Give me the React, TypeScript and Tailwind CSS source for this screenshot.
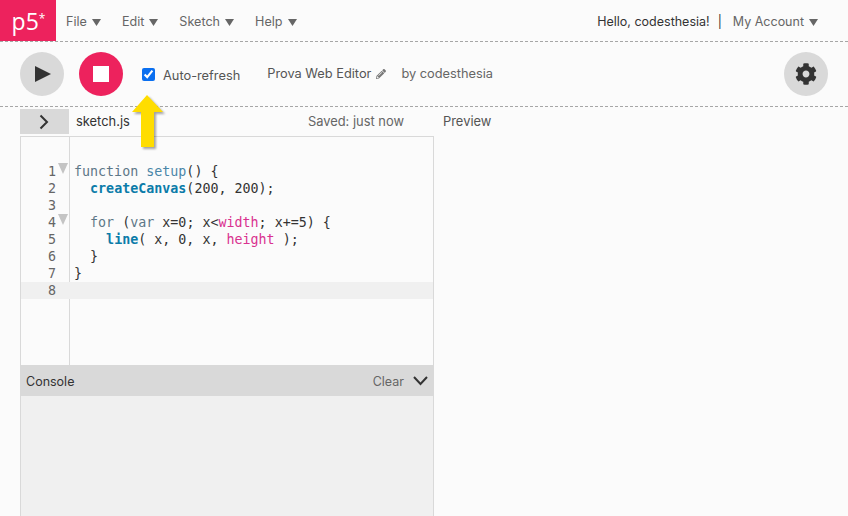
import { FaCog, FaPencilAlt } from "react-icons/fa";

const Caret = () => (
  <svg width="9" height="7" viewBox="0 0 9 7" className="ml-[5px] mt-[1px]">
    <path d="M0 0h9L4.500 7z" fill="#666" />
  </svg>
);

const Fold = () => (
  <svg width="10" height="11" viewBox="0 0 10 11" className="absolute left-[37px] top-0">
    <path d="M0 0h10L5 11z" fill="#c4c4c4" />
  </svg>
);

const Kw = ({ children }: { children: string }) => <span className="text-[#5d7787]">{children}</span>;
const Fn = ({ children }: { children: string }) => <span className="font-bold text-[#0b7ca9]">{children}</span>;
const Pk = ({ children }: { children: string }) => <span className="text-[#d9328f]">{children}</span>;

const lines = [
  <><Kw>function</Kw> <span className="text-[#4a86a8]">setup</span>() {"{"}</>,
  <>  <Fn>createCanvas</Fn>(200, 200);</>,
  <></>,
  <>  <Kw>for</Kw> (<Kw>var</Kw> x=0; x&lt;<Pk>width</Pk>; x+=5) {"{"}</>,
  <>    <Fn>line</Fn>( x, 0, x, <Pk>height</Pk> );</>,
  <>  {"}"}</>,
  <>{"}"}</>,
  <></>,
];

const menu = ["File", "Edit", "Sketch", "Help"];

export default function App() {
  return (
    <div className="relative h-[516px] w-full overflow-hidden bg-[#fbfbfb] text-[#333] font-['Inter',sans-serif]">
      <nav className="flex h-[42px] items-center border-b border-dashed border-[#a6a6a6] pr-[30px]">
        <div className="flex h-[41px] w-[56px] items-start justify-center bg-[#ed225d] pl-[1px] pt-[6px] font-['Open_Sans',sans-serif] text-[23px] font-medium leading-[30px] text-white">
          p5<span className="mt-[6px] text-[12px] leading-[14px]">*</span>
        </div>
        <ul className="ml-[10px] flex gap-[21px] pt-[3px] text-[12.6px] text-[#666]">
          {menu.map((item) => (
            <li key={item} className="flex items-center">
              {item}
              <Caret />
            </li>
          ))}
        </ul>
        <div className="ml-auto flex items-center pt-[3px] text-[12.5px]">
          <span className="text-[#333]">Hello, codesthesia!</span>
          <span className="ml-[8px] mr-[11px]">|</span>
          <span className="flex items-center text-[#666]">
            My Account
            <Caret />
          </span>
        </div>
      </nav>

      <div className="flex h-[65px] items-center border-b border-dashed border-[#a6a6a6] pl-[20px] pr-[20px]">
        <button className="flex size-[44px] items-center justify-center rounded-full bg-[#d9d9d9] pl-[2px]">
          <svg width="16" height="16" viewBox="0 0 16 16">
            <path d="M0 0l16 8-16 8z" fill="#333" />
          </svg>
        </button>
        <button className="ml-[15px] flex size-[44px] items-center justify-center rounded-full bg-[#ed225d]">
          <span className="size-[16px] bg-white" />
        </button>
        <input type="checkbox" defaultChecked className="ml-[19px] size-[13px] accent-[#0a6ff0]" />
        <span className="ml-[8px] mt-[3px] text-[12.8px] text-[#555]">Auto-refresh</span>
        <span className="ml-[27px] text-[12.8px] text-[#555]">Prova Web Editor</span>
        <FaPencilAlt className="ml-[5px] text-[#777]" size={10} />
        <span className="ml-[15px] text-[12.8px] text-[#666]">by codesthesia</span>
        <button className="ml-auto flex size-[44px] items-center justify-center rounded-full bg-[#d9d9d9]">
          <FaCog className="text-[#333]" size={22} />
        </button>
      </div>

      <div className="ml-[20px] mt-[2px] flex h-[25px] items-center text-[12.9px]">
        <div className="flex h-[25px] w-[49px] items-center justify-center bg-[#d9d9d9] pr-[2px]">
          <svg width="10" height="16" viewBox="0 0 10 16" fill="none" stroke="#333" strokeWidth="2">
            <path d="M1.500 1.500L8 8l-6.500 6.500" />
          </svg>
        </div>
        <span className="ml-[7px] mt-[1px] text-[#333]">sketch.js</span>
        <span className="ml-auto mt-[1px] text-[#666]">Saved: just now</span>
        <span className="ml-[39px] mt-[1px] w-[405px] text-[#555]">Preview</span>
      </div>

      <div className="ml-[20px] mt-[2px] flex h-[380px] w-[414px] flex-col border-x border-t border-[#d9d9d9]">
        <div className="relative flex-1 bg-[#fbfbfb] pt-[26px] font-['DejaVu_Sans_Mono',monospace] text-[13.33px] leading-[17px]">
          <div className="absolute bottom-0 left-[48px] top-0 w-px bg-[#d9d9d9]" />
          {lines.map((line, i) => (
            <div key={i} className={`relative flex h-[17px] ${i === 7 ? "bg-[#f0f0f0]" : ""}`}>
              <span className="w-[35px] text-right text-[#666]">{i + 1}</span>
              {(i === 0 || i === 3) && <Fold />}
              <pre className="ml-[18px] font-['DejaVu_Sans_Mono',monospace] text-[#333]">{line}</pre>
            </div>
          ))}
        </div>
        <div className="flex h-[31px] items-center justify-between bg-[#d9d9d9] pl-[5px] pr-[5px] pt-[3px] text-[12.5px]">
          <span className="text-[#333]">Console</span>
          <span className="flex items-center text-[#666]">
            Clear
            <svg width="15" height="10" viewBox="0 0 15 10" fill="none" stroke="#333" strokeWidth="2" className="ml-[9px] mb-[3px]">
              <path d="M1 1l6.500 7L14 1" />
            </svg>
          </span>
        </div>
        <div className="h-[120px] bg-[#f0f0f0]" />
      </div>

      <svg width="34" height="54" viewBox="0 0 34 54" className="absolute left-[131px] top-[94px] drop-shadow-[2px_2px_1px_rgba(0,0,0,0.35)]">
        <path d="M16 1l16 17H23v35H10V18H1z" fill="#ffdd00" />
      </svg>
    </div>
  );
}
